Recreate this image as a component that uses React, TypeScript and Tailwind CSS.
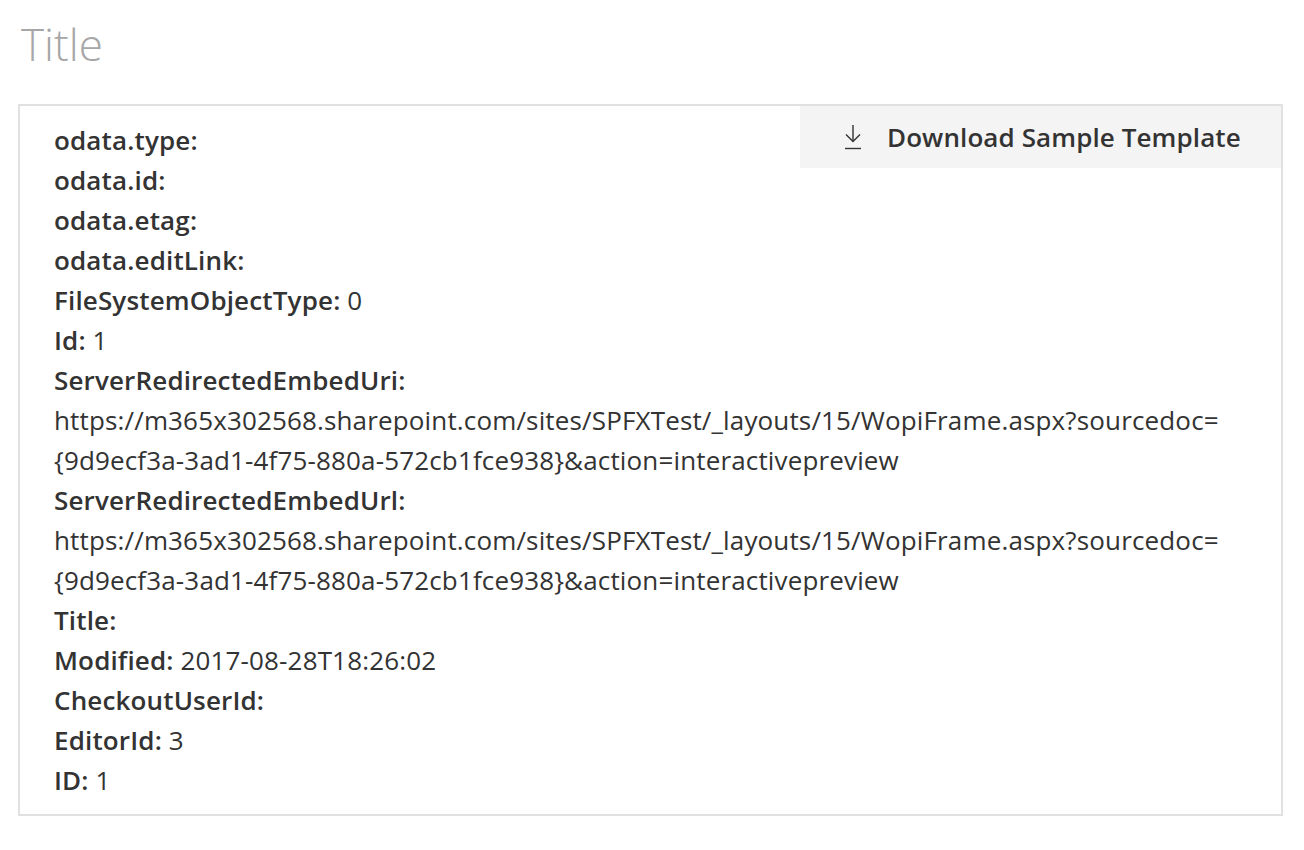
import React from "react";

const rows: Array<{ k: string; v?: string; lines?: string[] }> = [
  { k: "odata.type" },
  { k: "odata.id" },
  { k: "odata.etag" },
  { k: "odata.editLink" },
  { k: "FileSystemObjectType", v: "0" },
  { k: "Id", v: "1" },
  {
    k: "ServerRedirectedEmbedUri",
    lines: [
      "https://m365x302568.sharepoint.com/sites/SPFXTest/_layouts/15/WopiFrame.aspx?sourcedoc=",
      "{9d9ecf3a-3ad1-4f75-880a-572cb1fce938}&action=interactivepreview",
    ],
  },
  {
    k: "ServerRedirectedEmbedUrl",
    lines: [
      "https://m365x302568.sharepoint.com/sites/SPFXTest/_layouts/15/WopiFrame.aspx?sourcedoc=",
      "{9d9ecf3a-3ad1-4f75-880a-572cb1fce938}&action=interactivepreview",
    ],
  },
  { k: "Title" },
  { k: "Modified", v: "2017-08-28T18:26:02" },
  { k: "CheckoutUserId" },
  { k: "EditorId", v: "3" },
  { k: "ID", v: "1" },
];

export default function App() {
  return (
    <div
      className="w-[1304px] h-[850px] bg-white text-[#333333]"
      style={{ fontFamily: '"Open Sans", "Noto Sans", sans-serif' }}
    >
      <div className="pl-[21px] pt-[16px] h-[104px]">
        <div className="text-[44px] leading-[56px] font-light text-[#a6a6a6]">Title</div>
      </div>
      <div className="ml-[18px] w-[1265px] border-2 border-[#e1e1e1] relative">
        <button className="absolute top-0 right-0 w-[481px] h-[62px] bg-[#f4f4f4] flex items-center pl-[44px] gap-[25px] text-[26px] font-semibold text-[#333333] tracking-[0.1px]">
          <svg width="18" height="26" viewBox="0 0 18 26" fill="none" stroke="#333" strokeWidth="1.4">
            <path d="M9 1 V17" />
            <path d="M2 10.5 L9 17.5 L16 10.5" />
            <path d="M1 24.5 H17" />
          </svg>
          <span>Download Sample Template</span>
        </button>
        <div className="pl-[34px] pt-[14px] pb-[14px] text-[26px] leading-[40px] tracking-[0.15px]">
          {rows.map((r) => (
            <div key={r.k}>
              <div className="whitespace-nowrap">
                <span className="font-semibold">{r.k}:</span>
                {r.v !== undefined ? <span> {r.v}</span> : null}
              </div>
              {r.lines?.map((l, i) => (
                <div key={i} className="whitespace-nowrap">
                  {l}
                </div>
              ))}
            </div>
          ))}
        </div>
      </div>
    </div>
  );
}
